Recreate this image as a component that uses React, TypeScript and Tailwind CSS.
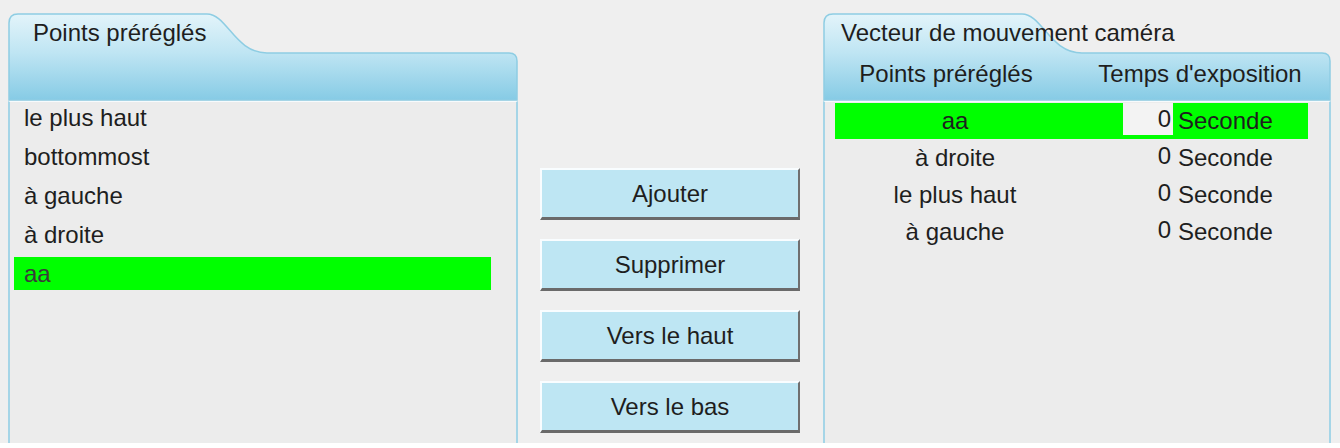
import React from "react";

const font = "font-['Liberation_Sans',Arial,sans-serif]";

const tabPath = (w: number) =>
  `M1,87 L1,10 Q1,1 10,1 L199,1 C219,1 227,40 259,40 L${w - 9},40 Q${w - 1},40 ${w - 1},48 L${w - 1},87 Z`;

const TabShape = ({ w, id }: { w: number; id: string }) => (
  <svg className="absolute inset-0" width={w} height={88} viewBox={`0 0 ${w} 88`}>
    <defs>
      <linearGradient id={id} x1="0" y1="0" x2="0" y2="1">
        <stop offset="0%" stopColor="#e3f4fa" />
        <stop offset="45%" stopColor="#bfe5f3" />
        <stop offset="100%" stopColor="#86cbe5" />
      </linearGradient>
    </defs>
    <path d={tabPath(w)} fill={`url(#${id})`} stroke="#8ecde3" strokeWidth="1.5" />
  </svg>
);

const Panel = ({
  w,
  id,
  title,
  titleClass,
  header,
  children,
}: {
  w: number;
  id: string;
  title: string;
  titleClass: string;
  header?: React.ReactNode;
  children: React.ReactNode;
}) => (
  <div className="flex flex-col h-[430px]" style={{ width: w }}>
    <div className="relative h-[88px] shrink-0">
      <TabShape w={w} id={id} />
      <div className={`relative h-[39px] flex items-center ${titleClass}`}>{title}</div>
      <div className="relative h-[44px] flex items-center">{header}</div>
    </div>
    <div className="flex-1 border-x-2 border-[#a5d5e7] border-t border-t-[#f7fbfd] bg-[#ececec]">
      {children}
    </div>
  </div>
);

const presets = ["le plus haut", "bottommost", "à gauche", "à droite", "aa"];

const vector = [
  { name: "aa", sel: true },
  { name: "à droite" },
  { name: "le plus haut" },
  { name: "à gauche" },
];

const Btn = ({ label }: { label: string }) => (
  <button className="h-[52px] w-[260px] bg-[#bee6f3] border-t-2 border-l-2 border-t-[#f9fdff] border-l-[#f9fdff] border-r-2 border-b-[3px] border-r-[#6f6f6f] border-b-[#6a6a6a] text-[24px] text-[#1e1e1e] flex items-center justify-center">
    {label}
  </button>
);

export default function App() {
  return (
    <div className={`${font} h-[443px] bg-[#efefef] overflow-hidden text-[24px] text-[#1e1e1e]`}>
      <div className="flex pt-[13px]">
        <div className="ml-[8px]">
          <Panel w={510} id="gl" title="Points préréglés" titleClass="pl-[25px]">
            <div className="-mt-[4px]">
              {presets.map((p) => (
                <div key={p} className="h-[39px] flex items-center pl-[4px] pr-[25px]">
                  {p === "aa" ? (
                    <div className="h-[33px] w-full bg-[#00ff00] flex items-center pl-[10px] text-[#3a3a3a]">{p}</div>
                  ) : (
                    <div className="pl-[10px]">{p}</div>
                  )}
                </div>
              ))}
            </div>
          </Panel>
        </div>

        <div className="ml-[22px] w-[260px] flex flex-col gap-[19px] pt-[155px]">
          <Btn label="Ajouter" />
          <Btn label="Supprimer" />
          <Btn label="Vers le haut" />
          <Btn label="Vers le bas" />
        </div>

        <div className="ml-[23px]">
          <Panel
            w={508}
            id="gr"
            title="Vecteur de mouvement caméra"
            titleClass="pl-[18px]"
            header={
              <div className="flex pl-[12px]">
                <div className="w-[222px] text-center">Points préréglés</div>
                <div className="ml-[30px] w-[226px] text-center whitespace-nowrap">Temps d'exposition</div>
              </div>
            }
          >
            <div className="pt-[1px]">
              {vector.map((r) => (
                <div key={r.name} className="h-[37px] pl-[10px] pr-[21px]">
                  <div className={`h-[36px] flex items-center ${r.sel ? "bg-[#00ff00]" : ""}`}>
                    <div className="w-[240px] text-center">{r.name}</div>
                    <div className="flex items-center pl-[48px]">
                      <div
                        className={`w-[50px] h-[32px] self-start flex items-center justify-end pr-[2px] ${
                          r.sel ? "bg-[#f3f3f3]" : ""
                        }`}
                      >
                        0
                      </div>
                      <div className="ml-[5px]">Seconde</div>
                    </div>
                  </div>
                </div>
              ))}
            </div>
          </Panel>
        </div>
      </div>
    </div>
  );
}
